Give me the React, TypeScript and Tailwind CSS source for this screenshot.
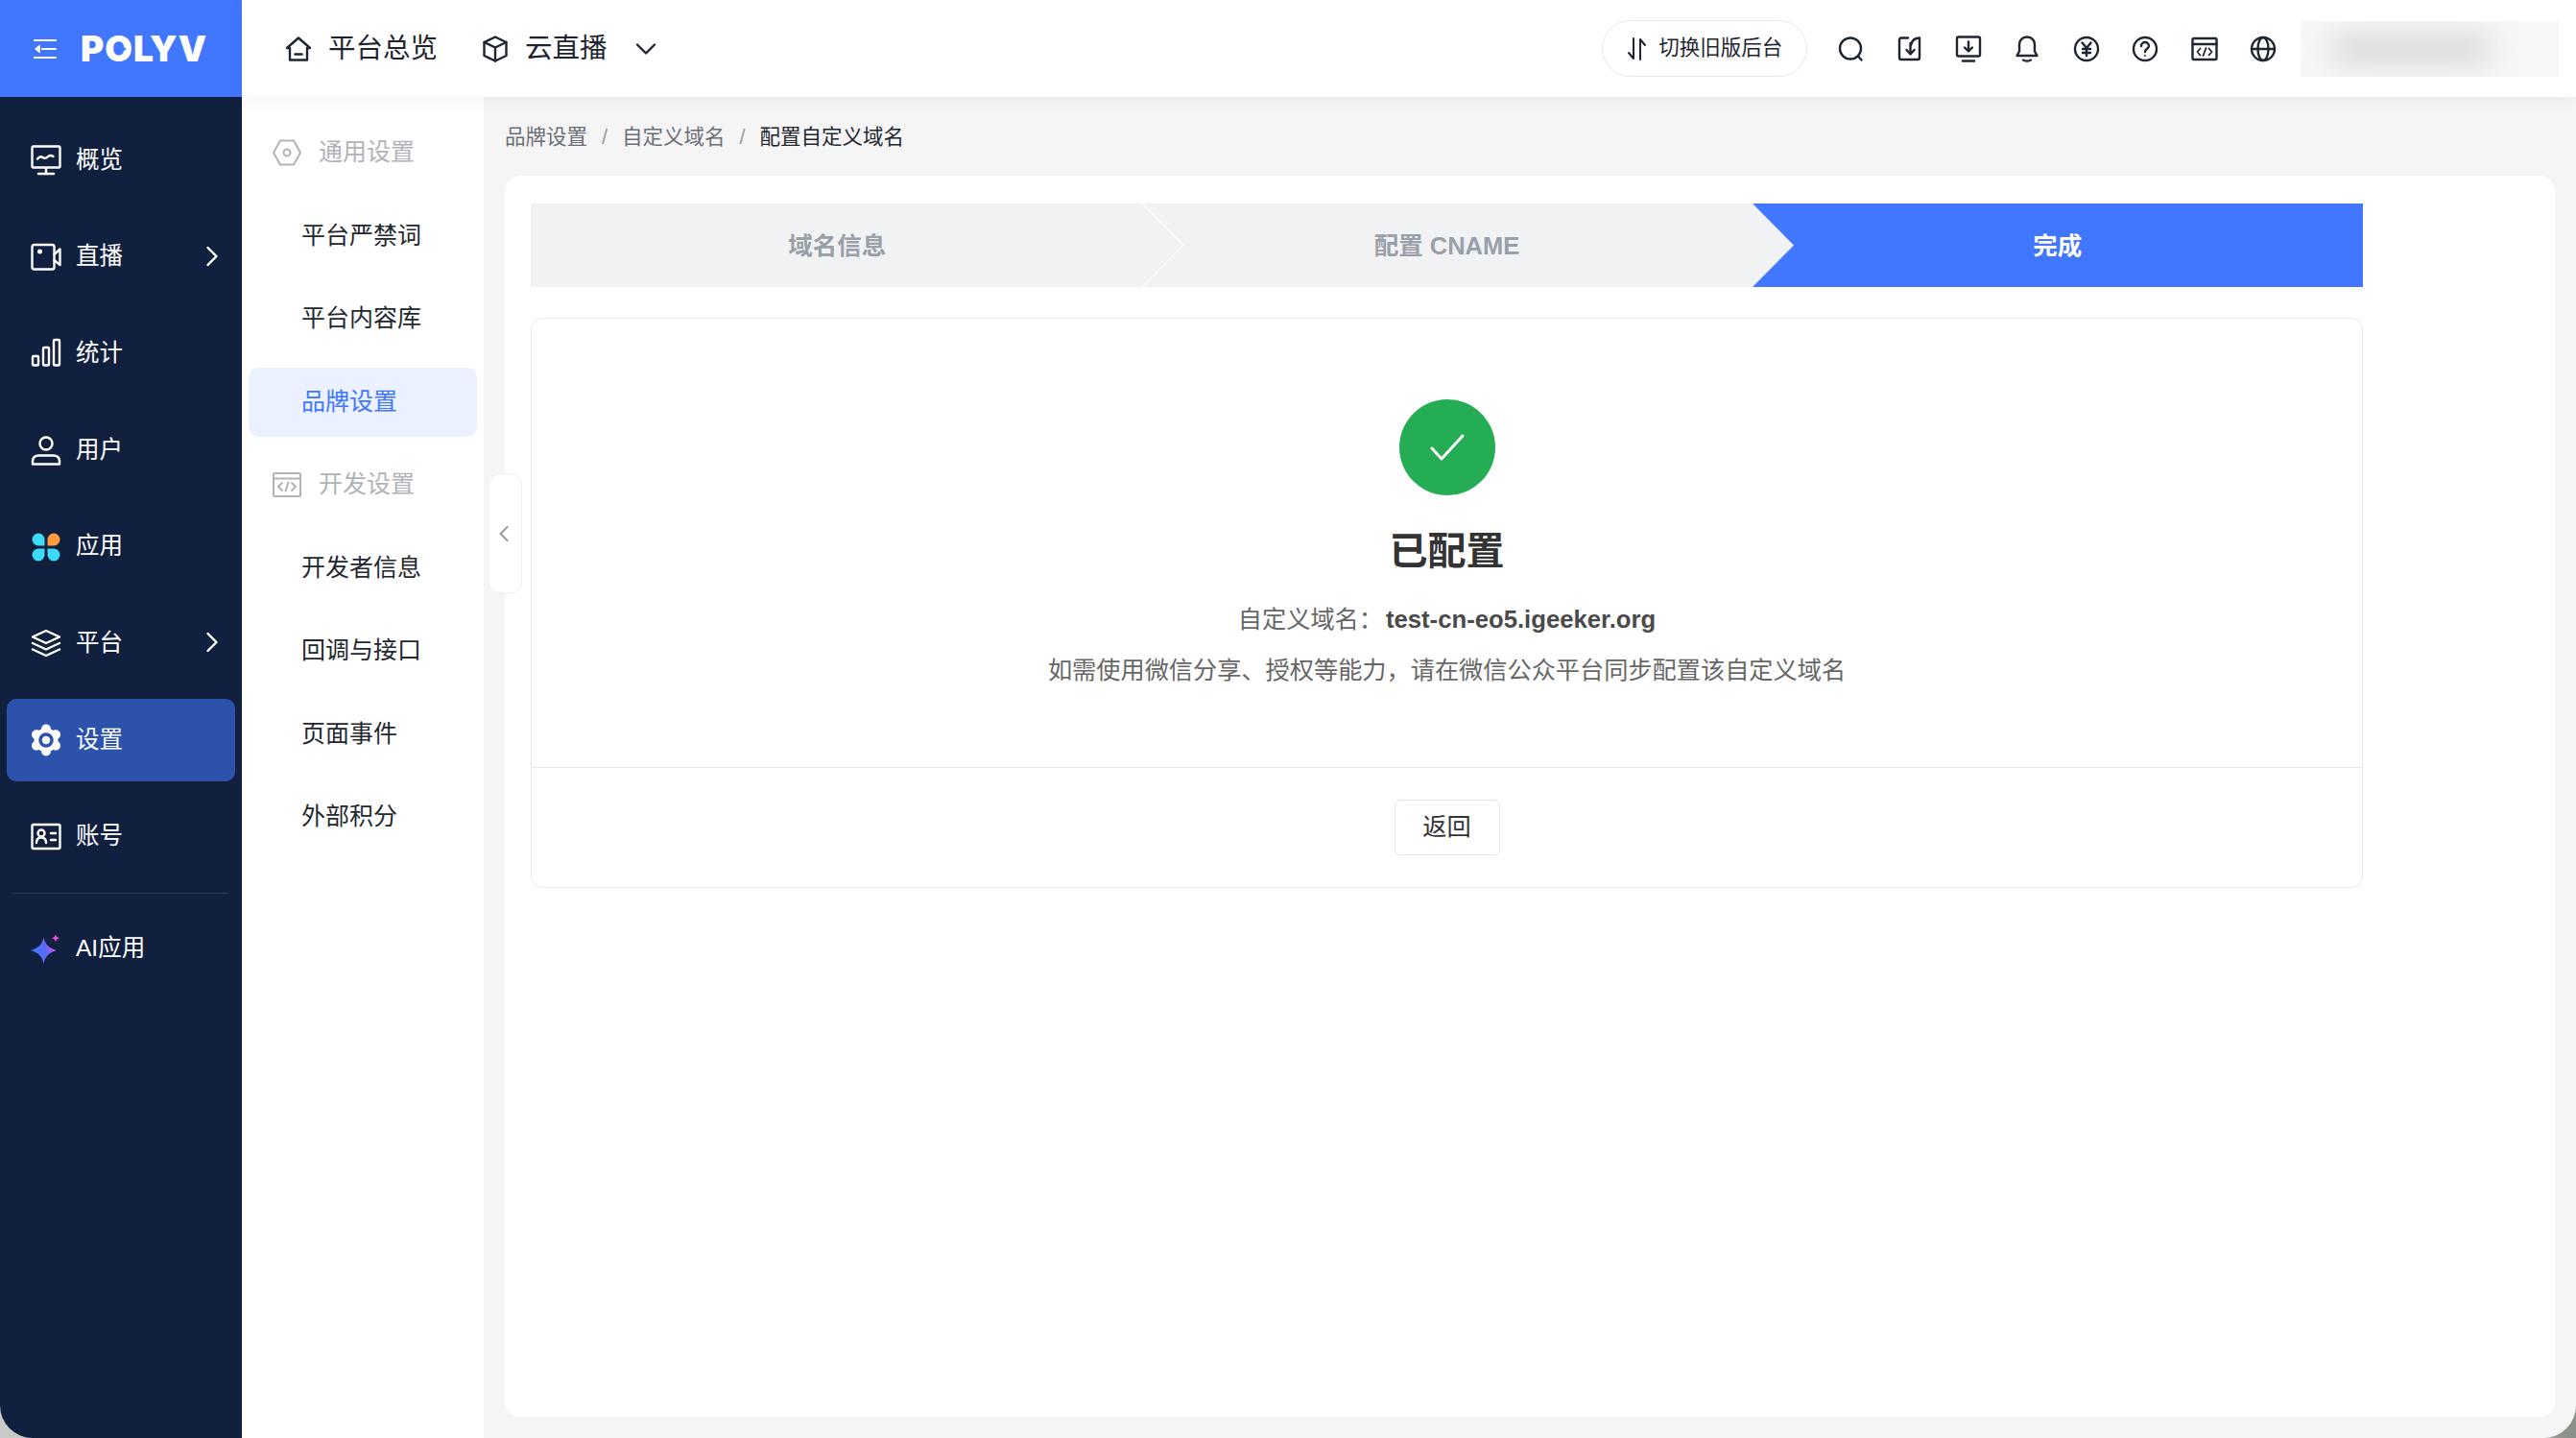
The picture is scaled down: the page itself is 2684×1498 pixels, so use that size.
import React from "react";

const SANS = "font-['Liberation_Sans','Noto_Sans_CJK_SC',sans-serif]";

const Stroke: React.FC<{ size: number; box?: number; width?: number; children: React.ReactNode; className?: string }> = ({ size, box = 32, width = 2.4, children, className }) => (
    <svg width={size} height={size} viewBox={`0 0 ${box} ${box}`} fill="none" stroke="currentColor" strokeWidth={width} strokeLinecap="round" strokeLinejoin="round" className={className}>
        {children}
    </svg>
);

/* sidebar icons */
const Overview = () => (
    <Stroke size={32}>
        <rect x="1.5" y="1.5" width="29" height="22" rx="1.5" />
        <path d="M7 14.5c2-2.5 3.500-3 5.500-1.500s3.500 1 5-.5 3.500-2 6-.5" />
        <path d="M16 24v6M8 30h16" />
    </Stroke>
);
const Live = () => (
    <Stroke size={32}>
        <rect x="1.500" y="3" width="23" height="25.500" rx="2" />
        <circle cx="9.500" cy="10" r="2.500" fill="currentColor" stroke="none" />
        <path d="M24.500 13l6-5.500v16.500l-6-5" />
    </Stroke>
);
const Stats = () => (
    <Stroke size={32}>
        <rect x="2" y="19" width="6" height="9.500" rx="1" />
        <rect x="13" y="10" width="6" height="18.500" rx="1" />
        <rect x="24" y="2" width="6" height="26.500" rx="1" />
    </Stroke>
);
const UserIcon = () => (
    <Stroke size={32}>
        <circle cx="16" cy="9" r="6.500" />
        <path d="M2 28c0-4 2.500-6.500 6.500-6.500h15c4 0 6.500 2.500 6.500 6.500v2.500H2z" />
    </Stroke>
);
const Apps = () => (
    <svg width="32" height="32" viewBox="0 0 32 32">
        <path d="M8 1.500a6.500 6.500 0 0 1 6.500 6.500v6.500H8A6.500 6.500 0 0 1 8 1.500z" fill="#3fd9f8" />
        <path d="M24 1.500a6.500 6.500 0 0 1 0 13h-6.500V8A6.500 6.500 0 0 1 24 1.500z" fill="#ff9b3d" />
        <path d="M8 30.500a6.500 6.500 0 0 1 0-13h6.500V24A6.500 6.500 0 0 1 8 30.500z" fill="#3fd9f8" />
        <path d="M24 30.500a6.500 6.500 0 0 1-6.500-6.500v-6.500H24a6.500 6.500 0 0 1 0 13z" fill="#3fd9f8" />
    </svg>
);
const Layers = () => (
    <Stroke size={32}>
        <path d="M16 3L30 9.500 16 16 2 9.500z" />
        <path d="M2 16l14 6.500L30 16" />
        <path d="M2 22.500L16 29l14-6.500" />
    </Stroke>
);
const Gear = () => (
    <svg width="34" height="34" viewBox="0 0 34 34">
        <g fill="#ffffff">
            <circle cx="17" cy="17" r="12.500" />
            <circle cx="17" cy="5.500" r="5" />
            <circle cx="17" cy="28.500" r="5" />
            <circle cx="7" cy="11.200" r="5" />
            <circle cx="27" cy="11.200" r="5" />
            <circle cx="7" cy="22.800" r="5" />
            <circle cx="27" cy="22.800" r="5" />
        </g>
        <circle cx="17" cy="17" r="6" fill="none" stroke="#2c52ac" strokeWidth="3.500" />
    </svg>
);
const Account = () => (
    <Stroke size={32}>
        <rect x="1.500" y="3" width="29" height="25" rx="1.500" />
        <circle cx="11" cy="12" r="3.500" />
        <path d="M6 22c0-4 2-5.500 5-5.500s5 1.500 5 5.500" />
        <path d="M21 12h5M21 19h5" />
    </Stroke>
);
const Spark = () => (
    <svg width="32" height="32" viewBox="0 0 32 32">
        <defs>
            <linearGradient id="ai" x1="0" y1="0.6" x2="1" y2="0.4">
                <stop offset="0" stopColor="#3e7bff" />
                <stop offset="0.55" stopColor="#5a6bfa" />
                <stop offset="1" stopColor="#e14fe6" />
            </linearGradient>
        </defs>
        <path d="M13.500 3.500c1.500 7 5 11 13.500 13.500-8.500 2.500-12 6.500-13.500 14-1.500-7.500-5-11.500-13.500-14 8.500-2.500 12-6.500 13.500-13.500z" fill="url(#ai)" />
        <path d="M26 0c.4 2.500 1.500 3.600 4.500 4.200-3 .6-4.100 1.800-4.500 4.300-.4-2.500-1.500-3.700-4.500-4.300 3-.6 4.100-1.700 4.500-4.200z" fill="#e94fd8" />
    </svg>
);
const Chevron = () => (
    <svg width="14" height="24" viewBox="0 0 14 24" fill="none" stroke="currentColor" strokeWidth="2.400" strokeLinecap="round" strokeLinejoin="round" className="-mt-[2px]">
        <path d="M2.500 3l9 9-9 9" />
    </svg>
);

/* header icons */
const Search = () => (
    <Stroke size={28} box={28}>
        <circle cx="14" cy="13.500" r="11" />
        <path d="M22 21.500l3.500 4" />
    </Stroke>
);
const Task = () => (
    <Stroke size={28} box={28}>
        <path d="M12 2.500H5a2 2 0 0 0-2 2V23a2 2 0 0 0 2 2h17a2 2 0 0 0 2-2V2.500c-5 0-8 3-9 7.500" />
        <path d="M14.500 8v11M10.500 15l4 4.500 4-4.500" />
    </Stroke>
);
const Download = () => (
    <Stroke size={28} box={28}>
        <rect x="2" y="1.500" width="24" height="20" rx="1.500" />
        <path d="M14 6.500V16M10 12.500l4 4 4-4" />
        <path d="M8 26.500h12" />
    </Stroke>
);
const Bell = () => (
    <Stroke size={28} box={28}>
        <path d="M14 1.500c-5 0-8 3.500-8 8v7l-2.500 4.500h21L22 16.500v-7c0-4.500-3-8-8-8z" />
        <path d="M10 25.500c1.500 1.500 6.500 1.500 8 0" />
    </Stroke>
);
const Yen = () => (
    <Stroke size={28} box={28}>
        <circle cx="14" cy="14" r="12" />
        <path d="M9.500 7.500L14 13l4.500-5.500M14 13v8M10 14h8M10 18h8" />
    </Stroke>
);
const Help = () => (
    <Stroke size={28} box={28}>
        <circle cx="14" cy="14" r="12" />
        <path d="M10 11c0-2.500 2-4 4-4s4 1.500 4 4-4 3-4 6" />
        <circle cx="14" cy="21" r="1" fill="currentColor" stroke="none" />
    </Stroke>
);
const Code = () => (
    <Stroke size={28} box={28}>
        <rect x="1.500" y="3" width="25" height="22" rx="1.500" />
        <path d="M1.500 9h25" />
        <path d="M9.500 13.500L6.500 17l3 3.500M18.500 13.500l3 3.500-3 3.500M15.500 13l-3 8" strokeWidth="1.800" />
    </Stroke>
);
const Globe = () => (
    <Stroke size={28} box={28}>
        <circle cx="14" cy="14" r="12" />
        <ellipse cx="14" cy="14" rx="5.500" ry="12" />
        <path d="M2 14h24" />
    </Stroke>
);
const Home = () => (
    <Stroke size={28} box={28}>
        <path d="M14 2.500L2 13h3v12.500h18V13h3z" />
        <path d="M10.500 19.500h7" />
    </Stroke>
);
const Cube = () => (
    <Stroke size={28} box={28}>
        <path d="M14 1.500l11.500 5.500v14L14 26.500 2.500 21V7z" />
        <path d="M2.500 7L14 12.500 25.500 7M14 12.500v14" />
    </Stroke>
);
const Swap = () => (
    <svg width="22" height="26" viewBox="0 0 22 26" fill="none" stroke="currentColor" strokeWidth="2" strokeLinecap="round" strokeLinejoin="round">
        <path d="M7 2v21L2 17M14 24V3l5 6" />
    </svg>
);
const Hex = () => (
    <svg width="30" height="28" viewBox="0 0 30 28" fill="none" stroke="#b0b3b8" strokeWidth="2">
        <path d="M8 1.500h14L29 14l-7 12.500H8L1 14z" strokeLinejoin="round" />
        <circle cx="15" cy="14" r="3.500" />
    </svg>
);
const DevIcon = () => (
    <svg width="30" height="26" viewBox="0 0 30 26" fill="none" stroke="#b0b3b8" strokeWidth="2" strokeLinecap="round" strokeLinejoin="round">
        <rect x="1" y="1" width="28" height="24" rx="1.500" />
        <path d="M1 6.500h28" />
        <path d="M10 11l-4 4 4 4M20 11l4 4-4 4M16.500 10.500l-3 9" />
    </svg>
);

const sideItems = [
    { label: "概览", icon: <Overview /> },
    { label: "直播", icon: <Live />, more: true },
    { label: "统计", icon: <Stats /> },
    { label: "用户", icon: <UserIcon /> },
    { label: "应用", icon: <Apps /> },
    { label: "平台", icon: <Layers />, more: true },
    { label: "设置", icon: <Gear />, active: true },
    { label: "账号", icon: <Account /> },
];

const subNav = [
    { label: "通用设置", group: true, icon: <Hex /> },
    { label: "平台严禁词" },
    { label: "平台内容库" },
    { label: "品牌设置", active: true },
    { label: "开发设置", group: true, icon: <DevIcon /> },
    { label: "开发者信息" },
    { label: "回调与接口" },
    { label: "页面事件" },
    { label: "外部积分" },
];

const toolIcons = [<Search />, <Task />, <Download />, <Bell />, <Yen />, <Help />, <Code />, <Globe />];

const Sidebar = () => (
    <aside className="w-[252px] shrink-0 bg-[#11203f] text-white flex flex-col">
        <div className="h-[101px] shrink-0 bg-[#4177ff] flex items-center pl-[35px] gap-[25px]">
            <svg width="24" height="22" viewBox="0 0 24 22" fill="none" stroke="#ffffff" strokeWidth="2.200" strokeLinecap="round">
                <path d="M1 2h22M9 11h14M1 20h22" />
                <path d="M6 7.500L1.500 11 6 14.500z" fill="#ffffff" strokeWidth="1" />
            </svg>
            <div className="relative font-['Inter',sans-serif] font-black text-[37px] leading-none tracking-[1px] text-white">
                POLYV
                <svg width="10" height="12" viewBox="0 0 10 12" className="absolute left-[39px] top-[13px]">
                    <path d="M1 1l8 5-8 5z" fill="#4177ff" />
                </svg>
            </div>
        </div>
        <nav className="flex flex-col gap-[14.700px] pt-[23px] px-[7px]">
            {sideItems.map((item) => (
                <div
                    key={item.label}
                    className={`h-[86px] rounded-[10px] flex items-center pl-[24px] pr-[17px] ${item.active ? "bg-[#2c52ac]" : ""}`}
                >
                    <span className="w-[34px] flex justify-center">{item.icon}</span>
                    <span className="ml-[14px] text-[24.500px] flex-1">{item.label}</span>
                    {item.more && <Chevron />}
                </div>
            ))}
        </nav>
        <div className="mx-[14px] mt-[15px] h-px bg-[#2b3a58]" />
        <div className="mt-[15px] px-[7px]">
            <div className="h-[86px] flex items-center pl-[24px]">
                <span className="w-[34px] flex justify-center"><Spark /></span>
                <span className="ml-[14px] text-[24.500px]">AI应用</span>
            </div>
        </div>
    </aside>
);

const TopBar = () => (
    <header className="relative z-10 h-[101px] shrink-0 bg-white flex items-center pl-[45px] pr-[18px] shadow-[0_4px_16px_rgba(0,0,0,0.05)] text-[#1f2530]">
        <Home />
        <span className="ml-[17px] text-[28.500px]">平台总览</span>
        <span className="ml-[46px]"><Cube /></span>
        <span className="ml-[17px] text-[28.500px]">云直播</span>
        <svg width="22" height="14" viewBox="0 0 22 14" fill="none" stroke="currentColor" strokeWidth="2.400" strokeLinecap="round" strokeLinejoin="round" className="ml-[29px]">
            <path d="M2 2.500l9 9 9-9" />
        </svg>
        <div className="ml-auto h-[59px] w-[214px] mr-[1px] rounded-full border border-[#e8e8e8] flex items-center justify-center gap-[11px] text-[21.500px]">
            <Swap />
            <span>切换旧版后台</span>
        </div>
        <div className="ml-[30px] flex items-center gap-[33.400px]">
            {toolIcons.map((icon, i) => (
                <span key={i} className="flex">{icon}</span>
            ))}
        </div>
        <div className="ml-[25px] w-[269px] h-[58px] overflow-hidden bg-[#f7f7f7] flex items-center pl-[30px]">
            <div className="w-[170px] h-[24px] rounded-full bg-[#cfcfcf] blur-[16px]" />
        </div>
    </header>
);

const SubNav = () => (
    <div className="w-[252px] shrink-0 bg-white flex flex-col gap-[14.500px] pt-[22px] px-[7px]">
        {subNav.map((item) =>
            item.group ? (
                <div key={item.label} className="h-[72px] flex items-center pl-[25px] text-[25px] text-[#b0b3b8]">
                    <span className="w-[30px] flex justify-center">{item.icon}</span>
                    <span className="ml-[18px]">{item.label}</span>
                </div>
            ) : (
                <div
                    key={item.label}
                    className={`h-[72px] rounded-[10px] flex items-center pl-[55px] text-[25px] ${item.active ? "bg-[#ebf1fe] text-[#4177ff]" : "text-[#23272f]"}`}
                >
                    {item.label}
                </div>
            ),
        )}
    </div>
);

const Steps = () => (
    <div className="relative h-[87px] w-[1909px] bg-[#f1f2f4] grid grid-cols-3 text-[25.500px] font-bold text-[#9aa0a9]">
        <div className="flex items-center justify-center pt-[2px] pl-[2px]">域名信息</div>
        <div className="flex items-center justify-center pt-[1px]">配置 CNAME</div>
        <div className="relative flex items-center justify-center text-white">
            <svg className="absolute inset-0 w-full h-full" viewBox="0 0 636 87" preserveAspectRatio="none">
                <path d="M0 0H636V87H0L43 43.500z" fill="#4177ff" />
            </svg>
            <span className="relative pt-[2px]">完成</span>
        </div>
        <svg className="absolute left-[637px] top-0" width="44" height="87" viewBox="0 0 44 87" fill="none" stroke="#fbfbfc" strokeWidth="1.500">
            <path d="M0 0l43 43.500L0 87" />
        </svg>
    </div>
);

const Done = () => (
    <div className="mt-[32px] w-[1909px] h-[594px] rounded-[12px] border border-[#e8e8e8] flex flex-col items-center">
        <div className="mt-[84px] w-[100px] h-[100px] rounded-full bg-[#25ad55] flex items-center justify-center">
            <svg width="36" height="28" viewBox="0 0 36 28" fill="none" stroke="#ffffff" strokeWidth="3" strokeLinecap="round" strokeLinejoin="round">
                <path d="M2 15l10 11L34 2" />
            </svg>
        </div>
        <h2 className="mt-[35px] text-[40px] leading-[46px] font-bold text-[#333333]">已配置</h2>
        <p className="mt-[30px] text-[25.200px] leading-[36px] text-[#666666] flex">
            <span>自定义域名：</span>
            <span className="font-bold ml-[3px] text-[25.700px] text-[#4a4a4a]">test-cn-eo5.igeeker.org</span>
        </p>
        <p className="mt-[17px] text-[25.200px] leading-[36px] text-[#666666]">
            如需使用微信分享、授权等能力，请在微信公众平台同步配置该自定义域名
        </p>
        <div className="mt-[83px] w-full h-px bg-[#e8e8e8]" />
        <button className="mt-[33px] w-[110px] h-[58px] rounded-[6px] border border-[#e4e4e4] bg-white text-[25.200px] text-[#333333]">
            返回
        </button>
    </div>
);

const App: React.FC = () => {
    return (
        <div className={`h-[1498px] w-[2684px] overflow-hidden bg-[linear-gradient(to_right,#c9c9c9_0%,#c9c9c9_95%,#8a8f86_100%)] ${SANS}`}>
            <div className="h-full flex rounded-b-[34px] overflow-hidden bg-[#f5f5f6]">
                <Sidebar />
                <div className="flex-1 min-w-0 flex flex-col">
                    <TopBar />
                    <div className="flex-1 min-h-0 flex">
                        <SubNav />
                        <main className="relative flex-1 min-w-0 pl-[22px] pr-[22px] pb-[22px] flex flex-col">
                            <div className="h-[82px] shrink-0 flex items-center pt-[2px] text-[21.500px] text-[#6b6f76] gap-[15px]">
                                <span>品牌设置</span>
                                <span className="text-[#9a9a9a]">/</span>
                                <span>自定义域名</span>
                                <span className="text-[#9a9a9a]">/</span>
                                <span className="text-[#23272f]">配置自定义域名</span>
                            </div>
                            <div className="flex-1 min-h-0 bg-white rounded-[16px] pl-[27px] pt-[29px]">
                                <Steps />
                                <Done />
                            </div>
                            <div className="absolute left-[5px] top-[392px] w-[35px] h-[125px] rounded-[12px] bg-white border border-[#f0f0f0] flex items-center pl-[10px] text-[#9a9a9a]">
                                <svg width="10" height="16" viewBox="0 0 10 16" fill="none" stroke="currentColor" strokeWidth="2" strokeLinecap="round" strokeLinejoin="round">
                                    <path d="M8.500 1L1.500 8l7 7" />
                                </svg>
                            </div>
                        </main>
                    </div>
                </div>
            </div>
        </div>
    );
};

export default App;
